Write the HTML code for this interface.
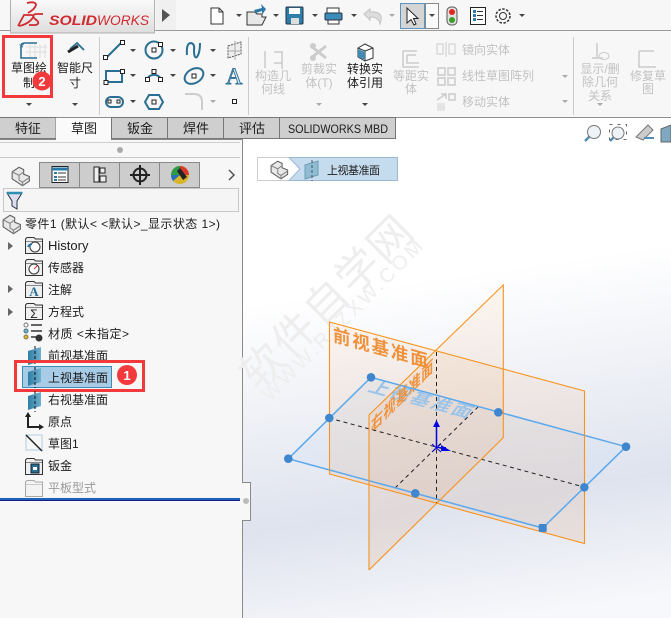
<!DOCTYPE html>
<html><head><meta charset="utf-8">
<style>
html,body{margin:0;padding:0;background:#fff}
svg{display:block}
text{font-family:"Liberation Sans","Noto Sans CJK SC",sans-serif;font-size:12px;fill:#1c1c1c}
.g{fill:#c2c2c2}
.c{text-anchor:middle}
.dd{fill:#444}
.dg{fill:#aaa}
.b{fill:none;stroke:#2a6f93;stroke-width:2}
.h{fill:#fff;stroke:#222;stroke-width:1}
</style></head><body>
<svg width="671" height="618" viewBox="0 0 671 618" xmlns="http://www.w3.org/2000/svg">
<defs>
<linearGradient id="bg" gradientUnits="userSpaceOnUse" x1="420" y1="280" x2="470" y2="625"><stop offset="0" stop-color="#fff"/><stop offset=".65" stop-color="#dfe3ee"/><stop offset="1" stop-color="#f7f8fb"/></linearGradient>
<linearGradient id="logo" x1="0" y1="0" x2="0" y2="1"><stop offset="0" stop-color="#fafafa"/><stop offset="1" stop-color="#dedede"/></linearGradient>
<linearGradient id="or" x1="0" y1="0" x2="0" y2="1"><stop offset="0" stop-color="#f7a860" stop-opacity=".09"/><stop offset="1" stop-color="#e0a070" stop-opacity=".18"/></linearGradient>
<linearGradient id="pl" x1="0" y1="0" x2="1" y2="0"><stop offset="0" stop-color="#2f7ea6"/><stop offset="1" stop-color="#6fb0cf"/></linearGradient>
<g id="plane"><path d="M0 4 L13 0 V14 L0 18Z" fill="url(#pl)"/><path d="M7 -1V20" stroke="#111" stroke-width="1" stroke-dasharray="3 2"/></g>
<g id="folder"><path d="M.5 16.500V2L2 .5H9L10.500 2H17.500V16.500Z" fill="#efefef" stroke="#333"/><path d="M1 4.500H17" stroke="#888"/></g>
<g id="part"><path d="M1 6 L7 2 L11 4 V8 L16 10 V14 L10 18 L1 12Z" fill="#e8e8e8" stroke="#666"/><path d="M1 6 L7 9 V13 L10 15 V18M7 9 L11 6M10 15 L16 11" fill="none" stroke="#888"/></g>
</defs>

<rect width="671" height="618" fill="#f7f7f7"/>
<!-- top bar -->
<rect y="30" width="671" height="1" fill="#9a9a9a"/>
<rect x="10.500" y="-1" width="144" height="34" fill="url(#logo)" stroke="#b0b0b0"/>
<g fill="none" stroke="#cf2b30" stroke-width="1.800"><path d="M27 3 Q36 1 36 5 Q35 9 28 13"/><path d="M18 26 L24 15 H31 Q36 15 30 21 Q25 25 19 26"/><path d="M43 14 H36 Q31 15 35 19 Q41 23 36 25 H29"/></g>
<text x="49" y="25" textLength="48" lengthAdjust="spacingAndGlyphs" style="font-size:14px;font-weight:bold;font-style:italic;fill:#cf2b30">SOLID</text>
<text x="97" y="25" textLength="52" lengthAdjust="spacingAndGlyphs" style="font-size:14px;font-style:italic;fill:#cf2b30">WORKS</text>
<rect x="156" y="0" width="20" height="30" fill="#f0f0f0"/><path d="M162 9 L170 15 L162 22Z" fill="#555"/>
<path d="M211 8H219L223 12V24H211Z" fill="#fff" stroke="#333"/><path d="M219 8V12H223" fill="none" stroke="#333"/>
<path d="M236 14h6l-3 3z" class="dd"/>
<path d="M247 12H255L257 14H262V17H266L262 25H247Z" fill="#e8e8e8" stroke="#333"/><path d="M254 10L262 8L261 4L266 9L262 15L262 11L256 13Z" fill="#2a79a8"/>
<path d="M273 14h6l-3 3z" class="dd"/>
<rect x="286" y="7" width="17" height="17" rx="1" fill="#2d7ea9" stroke="#234"/><rect x="289" y="8" width="11" height="6" fill="#fff"/><rect x="291" y="18" width="8" height="6" fill="#ddd"/>
<path d="M312 14h6l-3 3z" class="dd"/>
<path d="M327 8H339V13H327Z" fill="#fff" stroke="#333"/><rect x="325" y="13" width="17" height="7" rx="1" fill="#3d8bb8" stroke="#234"/><rect x="328" y="20" width="11" height="4" fill="#fff" stroke="#333"/>
<path d="M351 14h6l-3 3z" class="dd"/>
<path d="M364 14L370 9V12Q385 11 380 24Q379 17 370 17V20Z" fill="#ddd" stroke="#c4c4c4"/>
<path d="M389 14h6l-3 3z" class="dg"/>
<rect x="400.500" y="3.500" width="24" height="25" fill="#d5d5d5" stroke="#5a97c0"/>
<path d="M407 8V23L411 19.500L414 25L416 24L413.500 18.500H418Z" fill="#fff" stroke="#222"/>
<rect x="425.500" y="3.500" width="13" height="25" fill="#fafafa" stroke="#888"/><path d="M429 14h6l-3 3z" class="dd"/>
<rect x="447" y="7" width="10" height="18" rx="4" fill="#e0e0e0" stroke="#555"/><circle cx="452" cy="12" r="3" fill="#e3261b"/><circle cx="452" cy="20" r="3" fill="#3b9c2a"/>
<rect x="470.500" y="7.500" width="15" height="17" fill="#fff" stroke="#222"/><path d="M473 10h3v3h-3zM473 14h3v3h-3zM473 18h3v3h-3z" fill="#2a79a8"/><path d="M477 11.500h6M477 15.500h6M477 19.500h6" stroke="#333"/>
<circle cx="503" cy="16" r="3.500" fill="none" stroke="#333"/><circle cx="503" cy="16" r="7" fill="none" stroke="#333" stroke-width="1.500" stroke-dasharray="2.500 1.500"/>
<path d="M519 14h6l-3 3z" class="dd"/>

<!-- ribbon -->
<rect y="117" width="671" height="1" fill="#8e8e8e"/>
<rect x="99" y="37" width="1" height="78" fill="#ccc"/>
<rect x="248" y="37" width="1" height="78" fill="#ccc"/>
<rect x="573" y="37" width="1" height="78" fill="#ccc"/>
<!-- sketch -->
<path d="M26 47H47M26 52H47M30 44V58M35 44V58M40 44V58M45 44V58" stroke="#ddd"/>
<path d="M37 43H25Q21 43 21 47V58H37" fill="none" stroke="#2a6f93" stroke-width="1.600"/>
<text x="19" y="52" style="font-size:13px;fill:#2a6f93">*</text>
<text x="29" y="72" class="c">草图绘</text><text x="29" y="87" class="c">制</text>
<path d="M26 103h6l-3 3z" class="dd"/>
<rect x="3.500" y="36.500" width="48" height="60" fill="none" stroke="#f23a3c" stroke-width="3"/>
<circle cx="42" cy="81" r="9.500" fill="#f23a3c"/><text x="42" y="86" class="c" style="fill:#fff;font-size:13px;font-weight:bold">2</text>
<!-- dim -->
<path d="M70 49L77 43L84 50" fill="none" stroke="#2a6f93" stroke-width="1.800"/><path d="M68 52L78 46" stroke="#222" stroke-width="3"/>
<text x="75" y="72" class="c">智能尺</text><text x="75" y="87" class="c">寸</text>
<path d="M72 103h6l-3 3z" class="dd"/>
<!-- sketch tools -->
<path d="M106 58L122 42" class="b"/><rect x="103.500" y="55.500" width="4" height="4" class="h"/><rect x="120.500" y="40.500" width="4" height="4" class="h"/>
<path d="M130 49h6l-3 3z" class="dd"/>
<circle cx="154" cy="50" r="8.500" class="b"/><rect x="152" y="48" width="4" height="4" class="h"/><rect x="158.500" y="42.500" width="4" height="4" class="h"/>
<path d="M170 49h6l-3 3z" class="dd"/>
<path d="M187 55Q186 43 191 43Q195 44 194 50Q194 59 197 57Q200 53 200 43" fill="none" stroke="#2a6f93" stroke-width="2"/>
<path d="M210 49h6l-3 3z" class="dd"/>
<path d="M228 46L241 42V54L228 58Z" fill="#eee" stroke="#555" stroke-dasharray="2 1"/><path d="M235 41V60M228 51H242" stroke="#aaa"/>
<path d="M106 71H122V82H106Z" class="b"/><rect x="104" y="80.500" width="4" height="4" class="h"/><rect x="120.500" y="69.500" width="4" height="4" class="h"/>
<path d="M130 74h6l-3 3z" class="dd"/>
<path d="M147 79A8 8 0 0 1 161 79" class="b"/><rect x="152" y="69.500" width="4" height="4" class="h"/><rect x="145.500" y="77.500" width="4" height="4" class="h"/><rect x="158.500" y="77.500" width="4" height="4" class="h"/>
<path d="M170 74h6l-3 3z" class="dd"/>
<ellipse cx="194" cy="76" rx="10" ry="7" class="b" transform="rotate(-30 194 76)"/><rect x="192" y="74" width="4" height="4" class="h"/>
<path d="M210 74h6l-3 3z" class="dd"/>
<text x="234" y="84" class="c" style="font-family:'Liberation Serif',serif;font-size:23px;fill:#dfeaf1;stroke:#2a6f93;stroke-width:.9">A</text>
<rect x="106" y="97" width="17" height="10" rx="5" class="b"/><rect x="108" y="100" width="3" height="3" class="h"/><rect x="117" y="100" width="3" height="3" class="h"/>
<path d="M130 100h6l-3 3z" class="dd"/>
<path d="M149 95H159L163 102L159 109H149L145 102Z" class="b"/><rect x="152" y="100" width="4" height="4" class="h"/>
<path d="M185 94H194Q202 94 202 102V110" fill="none" stroke="#ccc" stroke-width="2"/>
<path d="M210 100h6l-3 3z" class="dg"/>
<rect x="232.500" y="99.500" width="4" height="4" class="h"/>
<!-- disabled -->
<path d="M265 51V68M274 52H282M274 63H282M282 51V69" fill="none" stroke="#ccc" stroke-width="1.500"/>
<text x="273" y="80" class="c g">构造几</text><text x="273" y="93" class="c g">何线</text>
<path d="M311 46L326 58M311 58L326 46" stroke="#ccc" stroke-width="3"/><circle cx="313" cy="46" r="3" fill="#ccc"/><circle cx="313" cy="58" r="3" fill="#ccc"/>
<text x="319" y="73" class="c g">剪裁实</text><text x="319" y="87" class="c g">体(T)</text>
<path d="M316 103h6l-3 3z" class="dg"/>
<path d="M358 48L365 44L373 48V58L365 61L358 57Z" fill="#fff" stroke="#333"/><path d="M358 48L365 51L373 48M365 51V61" fill="none" stroke="#333"/><path d="M358 49L365 52V60L358 57Z" fill="#3f8db5"/>
<text x="365" y="73" class="c">转换实</text><text x="365" y="87" class="c">体引用</text>
<path d="M362 103h6l-3 3z" class="dd"/>
<path d="M403 51H417M403 51V67H419M407 55H416M407 55V63H419" fill="none" stroke="#ccc" stroke-width="1.500"/>
<text x="411" y="80" class="c g">等距实</text><text x="411" y="93" class="c g">体</text>
<rect x="437" y="44" width="6" height="10" fill="none" stroke="#ccc"/><rect x="449" y="44" width="6" height="10" fill="none" stroke="#ccc"/><path d="M446 42V57" stroke="#ccc"/>
<text x="462" y="54" class="g">镜向实体</text>
<path d="M438 68h7v7h-7zM448 68h7v7h-7zM438 78h7v7h-7zM448 78h7v7h-7z" fill="none" stroke="#ccc" stroke-width="1.500"/>
<text x="462" y="80" class="g">线性草图阵列</text>
<path d="M562 75h6l-3 3z" class="dg"/>
<path d="M437 100L446 94M441 94H446V99" fill="none" stroke="#ccc" stroke-width="1.500"/><rect x="449" y="94" width="6" height="6" fill="none" stroke="#ccc" stroke-width="1.500"/><rect x="437" y="103" width="8" height="8" fill="#e4e4e4"/>
<text x="462" y="106" class="g">移动实体</text>
<path d="M562 100h6l-3 3z" class="dg"/>
<path d="M597 43V58M592 58H603" stroke="#ccc" stroke-width="1.500"/><ellipse cx="604" cy="56" rx="5" ry="3.500" fill="none" stroke="#ccc"/>
<text x="600" y="73" class="c g">显示/删</text><text x="600" y="86" class="c g">除几何</text><text x="600" y="100" class="c g">关系</text>
<path d="M597 103h6l-3 3z" class="dg"/>
<path d="M639 51H654M639 51V67H656" fill="none" stroke="#ccc" stroke-width="1.500"/>
<text x="648" y="80" class="c g">修复草</text><text x="648" y="93" class="c g">图</text>

<!-- viewport -->
<rect x="243" y="118" width="428" height="500" fill="url(#bg)"/>
<rect x="0" y="118" width="243" height="22" fill="#f7f7f7"/>
<rect x="243" y="118" width="428" height="22" fill="#fff"/>
<rect y="139" width="242" height="1" fill="#8a8a8a"/>
<rect x="242" y="139" width="1" height="343" fill="#8a8a8a"/>

<!-- tabs -->
<rect x="-1" y="117.500" width="57" height="21" fill="#cfcfcf" stroke="#777"/>
<rect x="56" y="118" width="55" height="22" fill="#fafafa"/>
<rect x="111.500" y="117.500" width="56" height="21" fill="#cfcfcf" stroke="#777"/>
<rect x="167.500" y="117.500" width="56" height="21" fill="#cfcfcf" stroke="#777"/>
<rect x="223.500" y="117.500" width="56" height="21" fill="#cfcfcf" stroke="#777"/>
<rect x="279.500" y="117.500" width="116" height="21" fill="#cfcfcf" stroke="#777"/>
<text x="28" y="133" class="c" style="font-size:13px">特征</text><text x="84" y="133" class="c" style="font-size:13px">草图</text><text x="140" y="133" class="c" style="font-size:13px">钣金</text><text x="196" y="133" class="c" style="font-size:13px">焊件</text><text x="252" y="133" class="c" style="font-size:13px">评估</text><text x="288" y="133" textLength="100" lengthAdjust="spacingAndGlyphs">SOLIDWORKS MBD</text>

<!-- heads up icons -->
<path d="M585 141L590 136M610 141L614 137" stroke="#4f8fb5" stroke-width="2.500"/>
<circle cx="594" cy="132" r="6.500" fill="#eef3f8" stroke="#777"/><rect x="609.500" y="124.500" width="17" height="15" fill="none" stroke="#666" stroke-dasharray="3 5"/><circle cx="618" cy="133" r="6" fill="#eef3f8" stroke="#777"/>
<path d="M636 137L648 125L653 130L643 140Z" fill="#ccc" stroke="#777"/><path d="M644 138H654" stroke="#4f8fb5" stroke-width="2"/>
<path d="M661 129L671 125V142H661Z" fill="#7fa9c2" stroke="#666"/>

<!-- breadcrumb -->
<rect x="257.500" y="157.500" width="140" height="23" fill="#fff" stroke="#ccc"/>
<path d="M289 157.500H397.500V180.500H289L300 169Z" fill="#c5dcee" stroke="#9cb8d4"/>
<use href="#part" transform="translate(270,159) scale(1.100)"/>
<g transform="translate(305,161)"><path d="M0 4 L13 0 V14 L0 18Z" fill="#8fbcd2" stroke="#6e9bb3"/><path d="M7 -1V20" stroke="#456" stroke-dasharray="3 2"/></g>
<text x="327" y="174" textLength="53" style="font-size:11px">上视基准面</text>

<!-- left panel -->
<rect y="142" width="240" height="1" fill="#d0d0d0"/>
<rect y="157" width="240" height="1" fill="#c8c8c8"/>
<circle cx="120" cy="150" r="3" fill="#aaa"/>
<rect x="39.500" y="162.500" width="160" height="25" fill="#cdcdcd" stroke="#8a8a8a"/>
<path d="M79.500 162V187M119.500 162V187M159.500 162V187" stroke="#8a8a8a"/>
<use href="#part" transform="translate(11,165) scale(1.150)"/>
<rect x="52" y="166.500" width="16" height="16" fill="#fff" stroke="#222"/><path d="M52 169H68" stroke="#2a79a8" stroke-width="3"/><path d="M54 172h3v2h-3zM54 176h3v2h-3zM54 179h3v2h-3z" fill="#2a79a8"/><path d="M58 173h8M58 177h8M58 180h8" stroke="#333"/>
<path d="M94 167h5v15h-5z" fill="#eee" stroke="#222"/><path d="M100 176h6v6h-6zM100 168h5v5h-5z" fill="#eee" stroke="#222"/><path d="M99 170.500h1M99 179h1" stroke="#222"/>
<circle cx="140" cy="175" r="6.500" fill="none" stroke="#222" stroke-width="2"/><path d="M140 165V185M130 175H150" stroke="#222" stroke-width="2"/>
<circle cx="180" cy="175" r="9" fill="#d8b52a"/><path d="M180 175L180 166A9 9 0 0 0 171 175Z" fill="#2c9b46"/><path d="M180 175V166A9 9 0 0 1 189 175Z" fill="#d63a2b"/><path d="M180 175L171 175A9 9 0 0 0 173 181Z" fill="#2a6fb8"/><path d="M180 168L187 177L183 180L177 171Z" fill="#222"/>
<path d="M229 170L234 175L229 180" fill="none" stroke="#555" stroke-width="1.500"/>
<rect x="3.500" y="188.500" width="235" height="23" fill="#f5f5f5" stroke="#c8c8c8"/>
<path d="M7 193H22L17 201V209L12 206V201Z" fill="#dde" stroke="#234"/><path d="M7 193H22" stroke="#2a8fb0" stroke-width="2.500"/>

<use href="#part" transform="translate(2,213) scale(1.150)"/>
<text x="25" y="228" textLength="195">零件1  (默认&lt; &lt;默认&gt;_显示状态 1&gt;)</text>
<path d="M8 242l5 4-5 4z" fill="#666"/><use href="#folder" x="25" y="237"/><circle cx="35" cy="247" r="5" fill="#fff" stroke="#333"/><path d="M28 247a5 5 0 0 1 4-3" stroke="#2a79a8" stroke-width="2" fill="none"/><text x="48" y="250" style="font-size:13px">History</text>
<use href="#folder" x="25" y="259"/><circle cx="34" cy="269" r="5" fill="#fff" stroke="#333"/><path d="M34 269l3-3" stroke="#d33"/><text x="48" y="272">传感器</text>
<path d="M8 285l5 4-5 4z" fill="#666"/><use href="#folder" x="25" y="281"/><text x="34" y="296" class="c" style="font-family:'Liberation Serif',serif;font-weight:bold;font-size:13px;fill:#2a6f93">A</text><text x="48" y="294">注解</text>
<path d="M8 308l5 4-5 4z" fill="#666"/><use href="#folder" x="25" y="303"/><text x="34" y="318" class="c" style="font-size:12px">Σ</text><text x="48" y="316">方程式</text>
<circle cx="26" cy="325" r="2" fill="#fff" stroke="#777"/><circle cx="26" cy="331" r="2" fill="#7cb1d8" stroke="#477"/><circle cx="26" cy="337" r="2" fill="#e3b71e" stroke="#875"/><path d="M31 325H42M31 331H42M31 337H36" stroke="#333" stroke-width="1.500"/><circle cx="39" cy="338" r="3.500" fill="#333"/>
<text x="48" y="338" textLength="81">材质 &lt;未指定&gt;</text>
<use href="#plane" x="28" y="347"/><text x="48" y="360">前视基准面</text>
<rect x="22.500" y="366.500" width="89" height="21" fill="#a8cbe6" stroke="#3d8bb8"/>
<use href="#plane" x="28" y="368"/><text x="48" y="382">上视基准面</text>
<rect x="15.500" y="361.500" width="128" height="29" fill="none" stroke="#f23a3c" stroke-width="3"/>
<circle cx="127" cy="375" r="10" fill="#f23a3c"/><text x="127" y="380" class="c" style="fill:#fff;font-size:13px;font-weight:bold">1</text>
<use href="#plane" x="28" y="392"/><text x="48" y="404">右视基准面</text>
<path d="M28 414V427H42" fill="none" stroke="#222" stroke-width="2"/><path d="M25 417L28 412L31 417ZM39 424L44 427L39 430Z" fill="#222"/><text x="48" y="426">原点</text>
<path d="M26 435H42V450H26Z" fill="none" stroke="#c9dce8" stroke-width="1.500"/><path d="M26 435L42 451" stroke="#222" stroke-width="1.500"/><text x="48" y="448">草图1</text>
<use href="#folder" x="25" y="458"/><rect x="31" y="464" width="8" height="9" fill="#2a6f93" stroke="#123"/><rect x="33" y="467" width="4" height="3" fill="#fff"/><text x="48" y="470">钣金</text>
<g opacity=".4"><use href="#folder" x="25" y="480"/></g><text x="48" y="492" style="fill:#9a9a9a">平板型式</text>
<rect y="498" width="240" height="2" fill="#1f5fc0"/><rect y="500" width="240" height="1" fill="#12208a"/>
<rect x="243" y="482" width="8" height="39" fill="#f7f7f7"/><circle cx="246" cy="501" r="3" fill="#bbb"/>
<path d="M242 482.500H250.500V520.500H242.500V618" fill="none" stroke="#8a8a8a"/>

<!-- watermark -->
<text transform="translate(258,392) rotate(-45)" style="font-size:43px;fill:#eeeeee;letter-spacing:2px">软件自学网</text>
<text transform="translate(270,402) rotate(-45)" textLength="218" style="font-size:20px;fill:#eeeeee">WWW.RJZXW.COM</text>

<!-- planes -->
<path d="M288 459L371 377L626 447L543 528Z" fill="#cfe0f5" fill-opacity=".3"/>
<path d="M329.500 322L584.500 391V543.500L329.500 474Z" fill="url(#or)"/>
<path d="M369 415L503.300 285V437.700L369 570Z" fill="url(#or)"/>
<text transform="matrix(.965 .27 0 1 333 341)" textLength="98" style="font-size:18px;font-weight:bold;fill:#f0923b">前视基准面</text>
<text transform="matrix(.97 .26 -.55 .75 367 391)" textLength="104" style="font-size:19px;font-weight:bold;fill:#9cc3e8">上视基准面</text>
<text transform="matrix(.707 -.707 0 1 371 433)" textLength="88" style="font-size:17px;font-weight:bold;fill:#f0923b">右视基准面</text>
<g fill="none" stroke="#222" stroke-dasharray="4 3.500"><path d="M436.500 352V503"/><path d="M329 418L584 487"/><path d="M395 488L478 407"/></g>
<g fill="none" stroke="#5aa8ee" stroke-width="1.500"><path d="M288.300 458.700L371 377.300L626 446.700L542.700 528Z"/></g>
<g fill="none" stroke="#f7931e" stroke-width="1.100"><path d="M329.500 322L584.500 391V543.500L329.500 474Z"/><path d="M369 570V415L503.300 285V437.700L369 570"/></g>
<g fill="#3f86cf"><circle cx="288.300" cy="458.700" r="4.300"/><circle cx="371" cy="377.300" r="4.300"/><circle cx="626" cy="446.700" r="4.300"/><rect x="538.700" y="524" width="8" height="8" rx="1.500"/><circle cx="329.300" cy="418" r="4.300"/><circle cx="498.300" cy="412.300" r="4.300"/><circle cx="584.300" cy="487.300" r="4.300"/><circle cx="415.300" cy="493.300" r="4.300"/></g>
<path d="M436.500 447.500V425" stroke="#0000e0" stroke-width="1.500"/><path d="M433 427L436.500 420L440 427ZM441 445L451 451L441 451Z" fill="#0000e0"/><path d="M432 444L441 452M441 444L432 452M436.500 447.500H446" stroke="#0000e0" stroke-width="1"/>
</svg>
</body></html>
